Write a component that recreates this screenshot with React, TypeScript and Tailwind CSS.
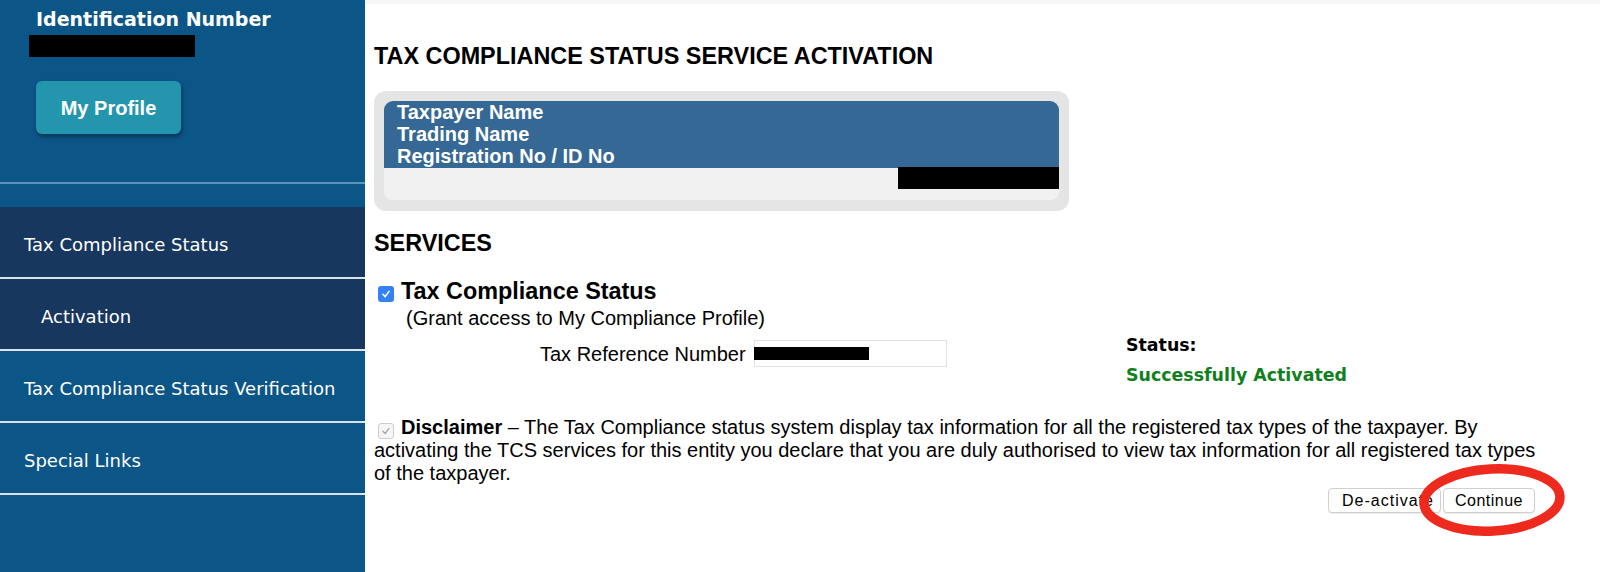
import React from "react";

interface NavItem {
  label: string;
  active?: boolean;
  indent?: boolean;
}

const navItems: NavItem[] = [
  { label: "Tax Compliance Status", active: true },
  { label: "Activation", active: true, indent: true },
  { label: "Tax Compliance Status Verification" },
  { label: "Special Links" },
];

const Sidebar: React.FC = () => {
  return (
    <aside className="flex w-[365px] shrink-0 flex-col bg-[#0c5587] font-['DejaVu_Sans',sans-serif] text-white">
      <div className="h-[182px] pl-[29px] pt-[8px]">
        <div className="ml-[7px] text-[19px] font-bold leading-[22px]">
          Identification Number
        </div>
        {/* redacted id */}
        <div className="mt-[5px] h-[22px] w-[166px] bg-black" />
        <button className="ml-[7px] mt-[24px] h-[53px] w-[145px] rounded-[6px] bg-[#2396ad] font-['Liberation_Sans',Arial,sans-serif] text-[20px] font-bold text-white shadow-[1px_3px_4px_rgba(0,0,0,0.35)]">
          My Profile
        </button>
      </div>
      <div className="h-[2px] bg-[#5e93b9]" />
      <div className="h-[23px]" />
      <nav className="flex flex-col">
        {navItems.map((item) => (
          <div
            key={item.label}
            className={
              "flex h-[72px] items-center border-b-2 border-[#dae2ea] pt-[4px] text-[18px] " +
              (item.active ? "bg-[#17375e] " : "bg-[#0c5587] ") +
              (item.indent ? "pl-[41px]" : "pl-[24px]")
            }
          >
            {item.label}
          </div>
        ))}
      </nav>
    </aside>
  );
};

const TaxpayerCard: React.FC = () => (
  <div className="mt-[21px] w-[695px] rounded-[12px] bg-[#e5e5e5] px-[10px] pb-[11px] pt-[10px]">
    <div className="h-[67px] rounded-t-[9px] bg-[#366896] pl-[13px] text-[20px] font-bold leading-[22px] text-white">
      <div>Taxpayer Name</div>
      <div>Trading Name</div>
      <div>Registration No / ID No</div>
    </div>
    <div className="flex h-[32px] justify-end rounded-b-[8px] bg-[#f1f1f1]">
      <div className="-mt-px h-[22px] w-[161px] bg-black" />
    </div>
  </div>
);

const App: React.FC = () => {
  return (
    <div className="relative flex h-[572px] w-[1600px] overflow-hidden bg-white">
      <Sidebar />
      <main className="flex flex-1 flex-col font-['Liberation_Sans',Arial,sans-serif] text-black">
        <div className="h-[4px] bg-[#f6f6f6]" />
        <div className="flex flex-col pl-[9px]">
          <h1 className="mt-[39px] text-[23.4px] font-bold leading-[27px]">
            TAX COMPLIANCE STATUS SERVICE ACTIVATION
          </h1>
          <TaxpayerCard />
          <h2 className="mt-[19px] text-[23.4px] font-bold leading-[27px]">
            SERVICES
          </h2>

          <div className="mt-[21px] flex">
            <div className="w-[752px]">
              <div className="flex items-start">
                <span className="ml-[4px] mt-[8px] flex h-[16px] w-[16px] items-center justify-center rounded-[3px] bg-[#3482f6]">
                  <svg width="10" height="10" viewBox="0 0 10 10" fill="none">
                    <path d="M2 5.3 L4.2 7.6 L8 2.4" stroke="white" strokeWidth="1.6" strokeLinecap="round" strokeLinejoin="round" />
                  </svg>
                </span>
                <span className="ml-[7px] text-[23.4px] font-bold leading-[27px]">
                  Tax Compliance Status
                </span>
              </div>
              <div className="ml-[32px] mt-[2px] text-[20px] leading-[22px]">
                (Grant access to My Compliance Profile)
              </div>
              <div className="ml-[166px] mt-[11px] flex h-[27px] items-center gap-[8px]">
                <span className="text-[20px] leading-[22px]">Tax Reference Number</span>
                <div className="flex h-[27px] w-[193px] items-center border border-[#e2e2e2]">
                  <div className="-ml-px h-[13px] w-[115px] bg-black" />
                </div>
              </div>
            </div>
            <div className="pt-[56px] font-['DejaVu_Sans',sans-serif] text-[17.4px] font-bold leading-[22px]">
              <div>Status:</div>
              <div className="mt-[8px] text-[#11801c]">Successfully Activated</div>
            </div>
          </div>

          <p className="mt-[30px] w-[1167px] text-[20px] leading-[22.5px]">
            <span className="ml-[4px] mr-[7px] inline-flex h-[16px] w-[16px] items-center justify-center rounded-[3px] border border-[#cdcdcd] bg-[#f6f6f6] align-[-2px]">
              <svg width="10" height="10" viewBox="0 0 10 10" fill="none">
                <path d="M2 5.3 L4.2 7.6 L8 2.4" stroke="#a3a3a3" strokeWidth="1.3" strokeLinecap="round" strokeLinejoin="round" />
              </svg>
            </span>
            <b>Disclaimer</b> – The Tax Compliance status system display tax information for all the
            registered tax types of the taxpayer. By activating the TCS services for this entity you
            declare that you are duly authorised to view tax information for all registered tax types
            of the taxpayer.
          </p>

          <div className="mr-[65px] mt-[4px] flex justify-end gap-[2px] text-[16px]">
            <button className="h-[25px] w-[113px] overflow-hidden whitespace-nowrap rounded-[4px] border border-[#d0d0d0] bg-white pl-[13px] text-left tracking-[1px] shadow-[0_1px_1px_rgba(0,0,0,0.08)]">
              De-activate
            </button>
            <button className="h-[25px] w-[92px] rounded-[4px] border border-[#d0d0d0] bg-white tracking-[0.5px] shadow-[0_1px_1px_rgba(0,0,0,0.08)]">
              Continue
            </button>
          </div>
        </div>
      </main>

      {/* red annotation circle drawn over the buttons */}
      <svg
        className="pointer-events-none absolute left-[1412px] top-[459px]"
        width="160"
        height="82"
        viewBox="0 0 160 82"
      >
        <ellipse
          cx="80"
          cy="41"
          rx="68"
          ry="31"
          fill="none"
          stroke="#ee2a1f"
          strokeWidth="9.5"
          transform="rotate(-3 80 41)"
        />
      </svg>
    </div>
  );
};

export default App;
